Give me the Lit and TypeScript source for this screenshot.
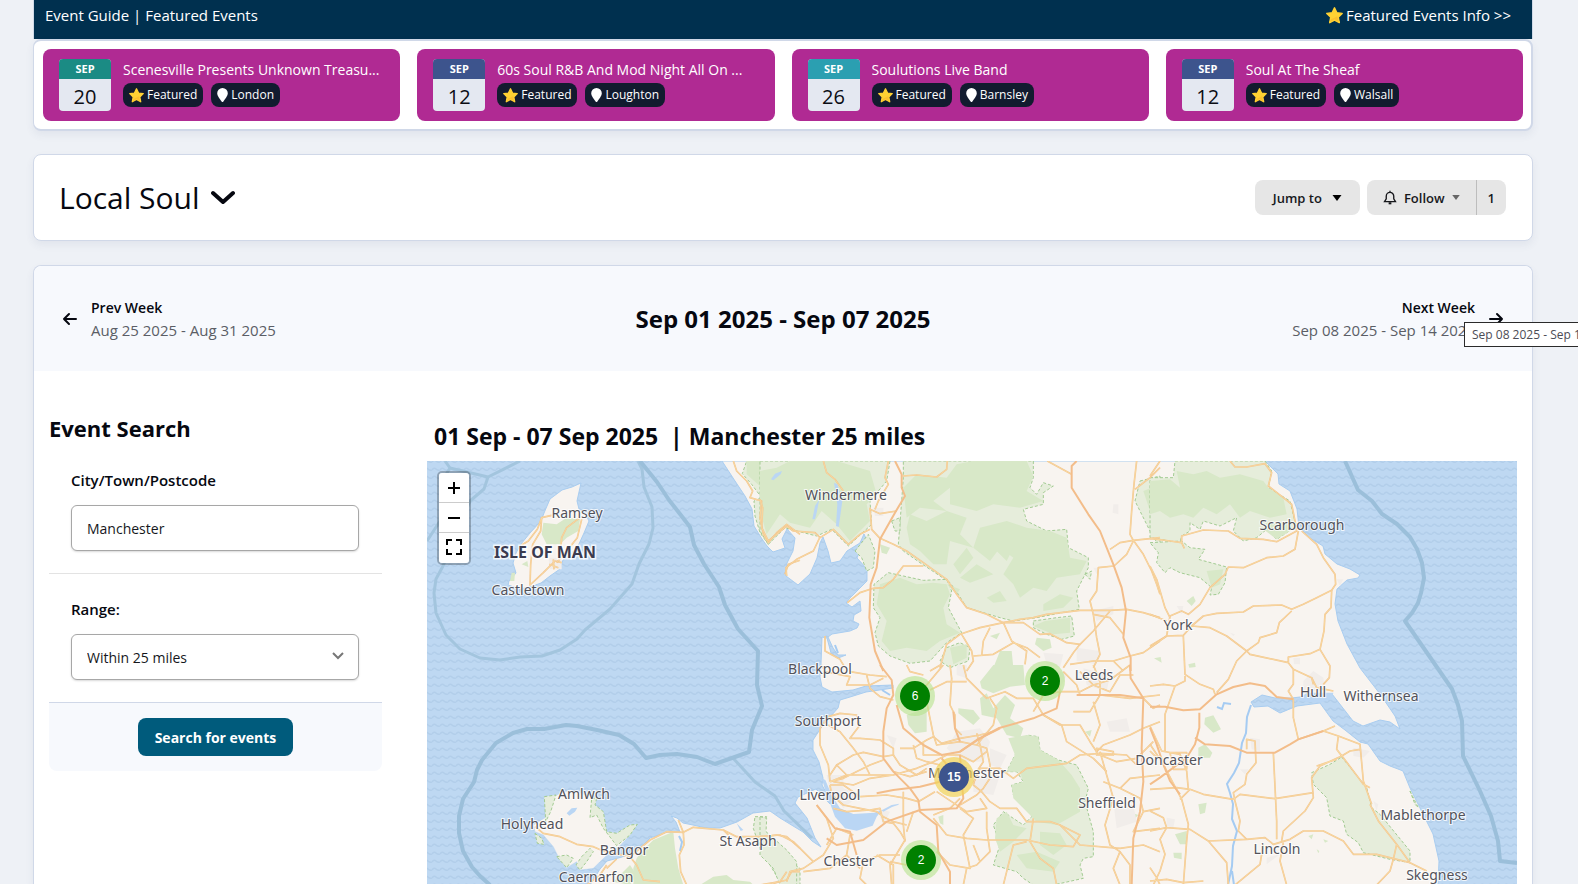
import { LitElement, html, svg, css } from "lit";
import { customElement, property } from "lit/decorators.js";

interface FeaturedEvent {
  month: string;
  day: string;
  title: string;
  town: string;
  tone: string;
}

const EVENTS: FeaturedEvent[] = [
  { month: "SEP", day: "20", title: "Scenesville Presents Unknown Treasu...", town: "London", tone: "green" },
  { month: "SEP", day: "12", title: "60s Soul R&B And Mod Night All On ...", town: "Loughton", tone: "blue" },
  { month: "SEP", day: "26", title: "Soulutions Live Band", town: "Barnsley", tone: "teal" },
  { month: "SEP", day: "12", title: "Soul At The Sheaf", town: "Walsall", tone: "blue" },
];

const star = (cls: string) => html`<svg class=${cls} viewBox="0 0 16 16" aria-hidden="true">
  <path d="M8 .8l2.200 4.600 5 .6-3.700 3.500 1 5.200L8 12.300l-4.500 2.400 1-5.200L.8 6l5-.6z" fill="#ffd233" stroke="#ffd233" stroke-width="1.400" stroke-linejoin="round"/>
  <path d="M10.600 8.800l1.300 5.300L8 11.600l-4 2.400 1-2.600L8 10z" fill="#fcc02f"/>
</svg>`;

/* ---------- map geometry ---------- */

const MAINLAND =
  "M722 460L735 480L745 495L752 508L754 525L762 538L767 545L773 551L785 547L782 538L787 528L795 537L793 550L787 562L786 575L798 584L810 573L817 557L820 542L823 536L828 550L831 562L840 560L847 550L860 542L864 533L868 542L860 550L857 557L867 568L867 580L860 587L850 597L846 602L852 606L860 600L861 610L854 614L853 620L859 623L857 627L850 630L832 633L828 636L833 647L838 654L846 654L838 657L831 652L827 637L822 636L821 663L820 676L822 686L832 691L853 689L866 685L893 684L893 687L866 691L850 696L840 699L838 707L823 724L813 739L813 749L819 761L823 777L822 784L827 793L830 803L816 788L798 796L795 802L807 817L815 837L821 846L812 840L803 831L780 817L770 810L753 812L737 821L720 827L706 827L693 824L683 822L677 817L671 815L676 821L680 831L667 831L650 837L640 847L622 856L607 860L600 868L590 884L1438 884L1439 860L1433 833L1423 813L1410 787L1403 770L1398 768L1390 765L1380 760L1368 743L1360 741L1345 729L1333 720L1320 702L1297 705L1280 712L1268 705L1254 706L1251 701L1262 694L1275 697L1292 697L1308 695L1318 695L1332 693L1353 720L1363 725L1380 719L1390 721L1400 728L1395 715L1380 693L1360 667L1347 643L1338 620L1335 603L1337 588L1347 579L1358 577L1360 574L1350 568L1337 563L1325 553L1323 545L1310 537L1299 526L1297 508L1290 490L1279 483L1278 473L1265 460Z";

const ISLAND =
  "M581 482L572 486L562 489L550 498L544 512L541 520L530 532L521 543L516 552L513 562L516 572L509 580L508 584L520 588L530 586L541 582L550 575L560 568L563 559L571 553L579 543L584 532L589 520L585 512L579 508L577 500Z";

const ANGLESEY =
  "M433 485L470 480L510 465L560 480L590 490L585 510L610 530L620 590L650 595L690 570L712 568L690 600L660 632L630 652L600 680L580 700L540 705L530 680L500 698L475 665L460 635L430 600L405 590L400 570L440 545L437 520ZM405 595L425 610L432 628L412 625Z";

/* Each layer is drawn on its own survey grid at three units to one map unit. */
interface Layer {
  x: number;
  y: number;
  parks: string[];
  woods: string[];
  urban: string[];
  roads: string[];
  motorways: string[];
  water: string[];
}

const LAYERS: Layer[] = [
  {
    x: 400, y: 400,
    parks: ["M1040 180L1200 180L1200 390L1165 370L1140 390L1105 430L1080 395L1065 345L1062 300L1085 290L1055 250L1027 218Z"],
    woods: [
      "M1040 180L1200 180L1200 350L1160 330L1110 370L1090 310L1085 260L1040 220Z",
      "M430 365L470 370L500 350L540 355L535 390L500 410L480 430L440 430L425 400Z",
      "M365 490L382 480L385 498ZM335 515L345 515L343 540L330 540Z",
    ],
    urban: ["M445 470L485 470L485 505L450 505Z"],
    roads: [
      "M455 343L425 350L412 385L385 420L365 432M425 350L422 390L398 430L392 490L390 552L430 515L465 480L485 485",
      "M540 350L500 380L485 410L483 435M545 355L532 410L500 450L470 485M448 490L475 500M460 475L462 505",
      "M1000 180L1010 210L1040 240L1058 270L1050 290L1085 300L1080 350L1090 400L1105 425L1130 395L1160 370L1200 400M1200 478L1165 490L1155 520",
    ],
    motorways: [],
    water: ["M1115 238L1145 208L1140 225L1118 240Z"],
  },
  {
    x: 400, y: 634,
    parks: [
      "M433 485L468 480L452 530L437 560ZM575 490L590 490L585 510L610 530L620 590L650 595L690 570L712 568L690 600L650 632L610 580L590 540L570 548ZM470 665L500 660L520 670L500 698Z",
      "M545 665L570 640L580 650L560 680L540 705L528 690ZM1065 545L1100 545L1085 580L1090 630L1130 640L1170 680L1200 700L1200 750L1140 740L1110 690L1080 640L1060 580Z",
      "M405 595L425 610L432 628L412 625Z",
    ],
    woods: [
      "M735 640L760 615L820 590L825 640L835 700L850 750L700 750L700 700L710 670Z",
      "M900 750L940 725L980 720L1000 735L1050 740L1060 750ZM640 740L690 690L710 720L690 750Z",
    ],
    urban: [],
    roads: [
      "M405 575L430 595L480 605L530 628L580 635L610 648L640 655L690 665L720 640L750 615L800 590L850 592L880 577L970 585L1010 605L1080 605L1130 600L1160 605L1200 640",
      "M835 555L850 592L852 630L838 660L842 710L860 750M690 665L710 690L730 735L780 740M620 700L650 672M560 750L600 720L620 690M1120 745L1160 735L1175 710L1200 710M970 585L985 600",
    ],
    motorways: [],
    water: ["M500 535L515 520L532 518L525 530L508 542ZM1010 565L1030 585L1022 588Z"],
  },
  {
    x: 760, y: 450,
    parks: [
      "M0 30L390 30L380 90L330 150L335 220L265 285L215 235L170 255L90 235L75 230L25 280L0 240Z",
      "M430 30L820 30L820 80L810 110L830 130L850 95L880 105L850 125L850 160L790 175L800 210L860 240L920 235L925 290L985 320L985 350L960 400L950 420L958 475L830 500L760 510L720 500L620 470L595 430L570 395L480 335L430 300L415 280L425 150L430 80Z",
      "M385 365L430 375L490 388L560 385L575 420L565 470L605 545L560 575L510 630L450 637L390 615L355 585L345 545L360 500L340 470L342 400Z",
      "M1140 90L1200 75L1200 290L1170 240L1140 180L1125 150ZM285 300L325 250L345 300L340 350L320 360L305 320Z",
      "M820 510L890 500L935 495L943 555L905 565L860 550L820 530ZM560 590L600 575L630 590L625 630L570 650L540 630Z",
      "M395 210L420 200L420 240L405 240ZM975 370L995 360L990 385Z",
    ],
    woods: [
      "M0 60L50 50L90 30L230 30L330 60L350 130L320 160L330 210L270 270L230 220L185 180L150 230L90 215L60 190L20 250L0 180Z",
      "M470 70L560 80L590 40L640 30L800 30L820 75L800 120L850 150L780 170L700 160L650 180L570 160L570 110L520 150L560 180L480 170L440 200L430 110Z",
      "M450 190L500 210L560 180L620 200L600 250L640 290L570 270L560 340L520 340L480 300L450 280L440 230Z",
      "M640 290L660 230L740 210L800 230L870 240L920 260L930 320L980 330L960 370L890 380L860 420L820 410L780 440L760 400L730 370L760 320L720 290L690 330Z",
      "M580 340L620 290L640 320L600 370ZM600 380L650 340L700 370L630 395ZM680 440L720 420L740 450L700 455ZM850 460L900 430L940 440L910 470L850 480ZM560 400L600 415L590 430ZM700 290L760 290L740 330Z",
      "M360 400L420 380L470 400L520 395L560 400L570 430L550 470L560 520L600 545L540 570L500 600L440 590L390 600L365 570L380 510L350 460Z",
      "M855 510L930 500L930 545L880 550L820 525ZM1150 120L1200 100L1200 190L1170 180ZM570 590L620 580L620 620L580 640ZM830 560L870 565L875 590L850 600L825 580ZM720 600L755 600L760 650L700 650ZM360 280L390 290L380 310L365 305ZM690 555L720 545L710 565Z",
    ],
    urban: ["M1000 480L1060 465L1060 490L1010 510ZM1060 160L1075 160L1075 190L1058 185ZM950 590L1020 600L1010 640L950 630ZM850 605L910 610L900 650L860 640ZM1000 350L1020 350L1010 370ZM340 170L370 170L370 195L345 195Z"],
    roads: [
      "M190 30L200 65L225 85L250 120M385 30L375 80L385 100L355 150L345 175M0 145L8 170L5 230L25 270L80 225L100 240L165 245L180 260L220 235L265 280L300 250L330 235",
      "M80 375L78 350L110 325L160 300L180 258M330 170L335 235L360 262L400 280L440 300L490 335L560 385L590 430L620 470L680 490L730 515L780 505L820 500L860 490L960 478L1000 478L1050 478L1100 475L1150 485L1200 500",
      "M428 75L470 72L530 78L560 55L562 30M330 175L360 188L410 180M262 455L300 425L340 412L370 410L400 385L430 345L490 345M540 650L560 580L600 550L660 530L730 515L790 515L840 550L870 548L920 575L960 580L1000 540L1050 480M605 550L635 600L640 630L620 660",
      "M640 615L700 610L760 575L800 590L840 620M690 530L670 570L665 615M730 515L755 570L800 600L795 640M862 30L935 70M1130 30L1122 100L1115 180L1110 250L1120 268M1125 115L1170 80L1200 50M1050 295L1080 275L1120 268L1200 260M1120 268L1150 310L1175 360L1190 400L1200 430M1120 270L1100 310L1062 345L1015 350L1010 420L990 450L1000 490L1050 500L1090 550M195 555L195 600L240 625L255 650",
      "M1000 490L1010 560L1020 610L1000 650M910 650L940 605L960 580M1110 615L1150 605L1200 570M930 640L1000 630L1060 630L1110 615M1060 630L1090 660M510 660L545 640",
    ],
    motorways: [
      "M405 30L425 70L425 110L435 135L405 185L360 265L350 350L332 400L328 500L345 600L370 660",
      "M950 30L935 45L935 110L985 190L1020 240L1060 340L1085 410L1098 480L1090 560L1112 620L1112 660",
    ],
    water: [
      "M33 85L45 68L66 60L62 70L40 88ZM157 205L165 165L178 145L170 185L165 205ZM228 225L232 160L222 95L232 100L247 150L240 200L236 228Z",
      "M60 350L70 360L73 390L65 385Z",
    ],
  },
  {
    x: 760, y: 664,
    parks: [
      "M765 270L800 210L835 215L840 255L895 285L950 300L985 370L975 410L1000 500L1000 575L970 580L960 600L970 640L880 660L820 660L790 640L770 620L700 600L720 540L700 480L730 440L790 480L820 450L760 390L755 360L790 350L770 320L740 320Z",
      "M0 455L20 460L18 500L80 555L110 590L110 660L60 660L40 610L0 570Z",
    ],
    woods: [
      "M660 50L700 0L790 0L795 60L750 65L700 85L665 70ZM595 130L640 135L660 160L640 180L595 145ZM660 100L680 85L700 130L735 90L765 120L750 160L790 190L780 220L740 210L710 160L665 150Z",
      "M745 220L800 210L835 215L840 255L895 285L935 330L960 370L960 440L890 480L830 470L790 430L760 400L755 360L790 350L780 320L740 320L765 270Z",
      "M440 150L500 130L500 200L465 205L445 180ZM710 460L740 440L760 480L800 490L760 530L720 560L705 520ZM840 500L900 505L920 540L880 570L840 540ZM770 570L830 560L900 590L880 620L800 610ZM535 455L550 450L550 480L540 475ZM975 200L995 195L990 215ZM1120 445L1135 450L1125 460Z",
    ],
    urban: ["M590 200L660 190L690 230L670 290L600 290L560 250ZM200 330L250 330L250 370L300 390L250 430L210 380ZM1040 170L1100 160L1110 200L1050 200ZM1060 410L1120 420L1130 470L1070 490ZM590 0L620 0L620 40L590 30ZM690 250L740 270L720 310L690 300ZM380 210L410 220L400 250ZM880 10L920 30L900 70ZM540 310L600 320L590 380L540 370ZM640 330L720 330L700 390L640 380ZM970 10L1050 30L1040 80L980 60ZM350 430L390 440L370 480Z"],
    roads: [
      "M185 0L195 20L270 35L260 60L330 60L370 40M270 20L330 30L380 35M320 30L330 70L360 95L400 105M205 155L180 190L180 240L205 300L210 350M205 155L240 145L290 150L300 180L270 220L300 220L360 225L400 250L400 270L370 275L310 262L280 270L230 300L210 330",
      "M205 180L240 200L280 250L310 290L330 330M230 300L260 330M210 350L260 330L400 330L470 310L520 290L560 270L600 270L640 290L680 260M210 350L250 340L330 300L370 285M220 350L280 360L330 340L400 330M400 320L450 335L500 320",
      "M210 360L250 360L300 395L380 390L440 400L475 410L525 380M210 360L215 390L250 420L300 430L350 440L370 455L400 470L440 480M220 430L260 440L330 435L360 430L370 470L400 475L420 500L435 525L390 600L395 660",
      "M400 270L420 300L470 330L500 310M420 250L460 250L500 225L520 215L545 235L600 220L660 210L700 200M460 240L470 280L500 290L540 300M490 230L490 270L540 270",
      "M430 380L430 480L435 530M500 110L510 160L520 210L530 240L600 230L650 240L680 250L690 300L690 340L670 370L650 390L600 420M650 205L660 240L670 290L650 320L640 360L665 380L690 410L720 430L770 430L800 470L870 470L900 480L960 540L1080 550",
      "M570 0L575 40L570 120L585 150L585 190L605 210M610 0L620 40L680 100L735 80L770 100L820 100L850 150L905 180L920 230L1000 280L1040 320M550 0L500 60L440 110M620 50L560 50L510 75M690 100L710 130L700 180L650 240",
      "M640 355L660 310L720 310L760 340L800 310L920 295L960 270L1020 265L1100 270L1130 300M820 460L810 530L840 580L880 610L890 660M800 530L760 540L740 620L730 660M560 510L620 520L680 525L800 525L870 540L940 545L960 510L900 480",
      "M600 430L640 460L610 510L620 560L630 610L570 600L530 560M680 440L680 490L690 560L650 600L620 610L610 660M520 460L560 510M460 440L440 500M530 380L560 400L620 440L680 430L660 400M600 400L570 430L520 450M640 540L660 590",
      "M170 420L200 460L220 520L190 570L130 610L90 620L80 650M0 515L60 510L100 530L160 590M200 540L230 490L280 510M270 510L260 570L210 610L130 620M310 590L360 570L420 570M310 590L300 640L320 660M260 570L300 610M350 570L400 600L400 660M0 660L60 650L80 620",
      "M890 30L900 80L960 80L1000 60L1050 80L1080 30L1120 30M910 20L950 60L960 90M1000 0L1020 50L1020 90L1110 100L1200 90M960 20L1000 60L1050 45L1110 0M850 150L900 180L960 180L990 230L1010 260L1030 240L1110 210L1150 190L1200 170M1000 110L1020 180L1000 230M1020 90L990 140L940 140M820 140L850 90L900 80M1020 260L1040 330L1060 400L1035 480L1050 540L1080 560L1110 600L1110 660",
      "M1020 270L1070 290L1130 280L1180 230M1030 350L1080 370L1140 400L1150 440L1120 500L1200 490M1080 370L1110 340L1200 330M1080 550L1150 540L1200 560M1080 560L1060 610L1080 660M1150 440L1200 430M1010 250L1060 260L1060 270L1010 270ZM1150 100L1180 130L1200 120M440 0L450 20L490 30M390 590L440 600",
    ],
    motorways: [
      "M360 0L395 45L400 90L380 130L370 200L370 280L400 320L450 370L475 405L480 440L530 480L535 560L570 620L570 660",
      "M410 120L430 190L490 240L545 270L600 260L650 225L715 190L820 160L890 130L900 80",
      "M600 270L605 350L610 400L590 430L480 435L380 470L310 525L230 540L200 520M600 230L585 190L580 140M545 280L570 310L540 350L480 365L400 375L350 385",
      "M170 420L225 490L270 500L290 570M1110 0L1112 40L1150 100L1145 250L1150 350L1140 440L1120 520L1115 660M950 90L1080 90L1150 100M720 190L660 220L600 260",
    ],
    water: [
      "M185 340L200 390L212 420L225 455L255 490L290 497L338 482L350 455L365 436L343 443L280 447L240 430L215 390L196 345ZM365 436L395 420L418 416L414 420L396 426L370 440Z",
    ],
  },
  {
    x: 1150, y: 450,
    parks: [
      "M0 80L70 80L75 30L345 30L365 60L355 110L420 150L432 200L440 225L380 265L350 235L320 260L280 270L250 240L260 200L210 225L160 210L150 235L120 215L120 240L95 255L90 275L0 260Z",
      "M0 275L95 270L120 290L165 295L145 325L230 348L225 395L205 430L180 432L185 410L150 380L90 365L60 350L45 365L20 335L25 305Z",
      "M575 918L650 1010L665 1070L690 1090L780 1200L780 1235L720 1225L640 1205L625 1175L590 1150L580 1110L540 1095L530 1040L490 1000L485 965L540 940Z",
      "M780 1020L805 1070L795 1060Z",
    ],
    woods: [
      "M0 90L60 85L90 110L80 60L130 70L170 60L210 80L270 70L340 90L355 110L400 140L410 190L360 200L300 180L270 200L240 160L200 190L160 170L130 200L100 190L60 200L30 180L0 190ZM340 235L350 215L420 215L420 240L380 265Z",
      "M165 800L190 793L213 835L190 845L163 820ZM145 890L165 880L187 905L180 920L145 920ZM110 450L130 435L137 450L125 465ZM12 622L32 618L35 635ZM115 640L135 635L137 648L118 650ZM75 1150L110 1140L110 1180L90 1180Z",
      "M70 1205L95 1205L95 1225L72 1220ZM145 1060L170 1055L165 1085L150 1090ZM475 1155L490 1150L485 1165ZM520 1165L535 1170L525 1175ZM500 1195L508 1200L505 1207ZM170 360L220 355L210 400L185 410Z",
    ],
    urban: ["M460 690L490 660L520 680L525 720L460 720ZM430 620L450 620L450 640L432 640ZM610 890L660 900L640 920L610 915ZM300 860L330 865L330 900L305 895ZM350 1220L390 1210L350 1240ZM670 1050L685 1060L680 1080ZM80 465L100 465L95 490ZM240 545L255 550L250 555ZM50 1100L75 1105L70 1130L50 1125ZM270 955L295 955L285 970ZM560 385L580 385L570 405Z"],
    roads: [
      "M240 30L255 48L290 48L345 38L365 65L355 105L400 140L425 160L435 210L440 240L380 272L340 265L270 262L235 240L160 237L95 255L95 275L60 270L0 262M95 275L103 292",
      "M455 240L500 280L520 320L555 370L557 400L545 418L500 440L460 460L425 475L395 462L310 465L280 483L200 487L160 495L125 525M445 240L435 295L400 315L350 320L280 350L235 348L225 370L180 410L150 460L115 490L95 480L60 495L50 555L0 585",
      "M545 418L543 470L525 490L522 540L510 595L540 645L538 680L520 700M510 595L480 608L415 618L415 635L300 610L290 600L325 575L330 560L380 545L388 515L425 480M415 635L430 655L485 680L500 710L550 720M430 655L430 700L415 720L430 745L430 800L445 865",
      "M0 345L20 385L45 470L60 500M125 525L180 530L230 555L290 600L260 630L235 685L200 725M0 490L50 510M100 555L105 670L150 700L190 715L195 730M50 555L100 553L125 525M105 675L105 690L75 705L45 790L45 900M0 705L40 700L75 705M0 590L50 555",
      "M485 680L490 700M520 840L565 855L630 880L640 990L665 1060M445 865L520 840L555 825M565 855L560 895L580 920L640 1000L660 1010M560 895L575 915L510 945L485 980L490 1040L465 1080L400 1140L395 1170M575 915L600 900L630 895M500 945L560 925",
      "M660 1060L685 1110L740 1180L780 1235L830 1260M740 1180L730 1225L720 1260L680 1302M290 895L290 865L315 870L318 935L290 970L285 1000L250 1025L255 1050L270 1110L265 1140L290 1165M370 905L380 1110L380 1165M250 1045L270 1030L375 1043L490 1025",
      "M30 30L0 75M0 1015L80 1010L120 1015L160 1030L250 1045M0 825L35 900L90 910L110 960L115 1015M40 940L95 1045L115 1120L110 1170L100 1302M90 1045L120 1015M60 905L110 905L110 955L70 955ZM0 880L40 940M0 1080L40 1100L50 1130L120 1135L175 1170L290 1165L345 1160L370 1180L420 1165L460 1140L520 1140L580 1170L610 1210L680 1210L740 1225L780 1235",
      "M175 1170L230 1235L235 1302M0 1140L50 1130M50 1130L30 1165L45 1210L30 1260L10 1302M0 1290L50 1285L100 1295L160 1290M340 1180L330 1240L255 1302M400 1175L390 1230L410 1302M0 1250L20 1280L30 1302M0 900L20 920",
    ],
    motorways: [
      "M0 767L45 767L100 778L150 775L200 730L250 708L300 697L345 705L380 738L430 745M148 785L148 830L135 880L110 920L30 980L0 1000M135 860L165 880L240 885L290 905L375 905L420 880L445 865L520 840M0 830L20 880L40 940L60 990L90 1030",
    ],
    water: [
      "M470 725L550 725L545 745L510 755L440 750Z",
    ],
  },
];

const RIVERS =
  "M1251 704L1247 716L1246 732L1242 742L1239 762L1234 772L1227 783L1230 792L1233 803L1232 818L1237 830L1233 845L1232 865L1228 884M1217 706L1222 708L1224 702L1231 703M835 644L838 652M882 689L890 694M1234 884L1232 870M679 835L682 841L680 850";

const LIMITS = [
  "M640 460L657 481L669 499L680 513L690 526L694 544L704 563L719 586L725 604L738 628L758 650L757 684L762 705L752 729L749 751L732 757L715 763L697 756L677 753L660 754L646 757L634 743L619 734L597 729L577 725L566 724L544 728L527 728L513 732L496 742L482 759L477 769L474 781L463 798L459 815L459 832L463 850L472 866L480 875L490 884",
  "M1345 460L1358 489L1372 500L1382 513L1397 523L1410 536L1417 548L1422 562L1424 577L1421 592L1418 602L1412 612L1405 620L1452 688L1458 704L1462 720L1463 755L1480 790L1491 815L1498 840L1500 860L1517 862",
];
const LIMITS_SOFT = [
  "M445 460L450 467L488 476L520 460M450 467L442 480L440 520L427 540M488 476L484 488L470 500L443 565L436 578L434 592L436 612L446 634L460 648L480 657L500 659L520 656L542 655L560 649L577 638L585 629L610 608L632 583L639 563L649 543L653 527L652 506L644 486L642 468L638 460",
  "M733 757L755 781L775 795L784 810L812 837",
];

interface Place { x: number; y: number; name: string }
const PLACES: Place[] = [
  { x: 577, y: 517, name: "Ramsey" },
  { x: 528, y: 594, name: "Castletown" },
  { x: 846, y: 499, name: "Windermere" },
  { x: 1302, y: 529, name: "Scarborough" },
  { x: 1178, y: 629, name: "York" },
  { x: 820, y: 673, name: "Blackpool" },
  { x: 1094, y: 679, name: "Leeds" },
  { x: 1313, y: 696, name: "Hull" },
  { x: 1381, y: 700, name: "Withernsea" },
  { x: 828, y: 725, name: "Southport" },
  { x: 967, y: 777, name: "Manchester" },
  { x: 1169, y: 764, name: "Doncaster" },
  { x: 1107, y: 807, name: "Sheffield" },
  { x: 830, y: 799, name: "Liverpool" },
  { x: 584, y: 798, name: "Amlwch" },
  { x: 532, y: 828, name: "Holyhead" },
  { x: 624, y: 854, name: "Bangor" },
  { x: 748, y: 845, name: "St Asaph" },
  { x: 849, y: 865, name: "Chester" },
  { x: 596, y: 881, name: "Caernarfon" },
  { x: 1423, y: 819, name: "Mablethorpe" },
  { x: 1277, y: 853, name: "Lincoln" },
  { x: 1437, y: 879, name: "Skegness" },
];

const CLUSTERS = [
  { x: 915, y: 695, count: 6, busy: false },
  { x: 1045, y: 680, count: 2, busy: false },
  { x: 954, y: 776, count: 15, busy: true },
  { x: 921, y: 859, count: 2, busy: false },
];

@customElement("event-map")
export class EventMap extends LitElement {
  static styles = css`
    :host { display: block; position: relative; overflow: hidden; background: #bed8f2; font-family: "Noto Sans", "Open Sans", sans-serif; }
    .canvas { position: absolute; inset: 0; width: 100%; height: 100%; display: block; }
    .land { fill: #f8f4f0; stroke: #a9cdf0; stroke-width: 1; }
    .park { fill: #e6eddb; stroke: #a3cb93; stroke-width: 3; stroke-dasharray: 9 6; }
    .wood { fill: #d8e8c8; }
    .urban { fill: #f1edea; }
    .road-case { fill: none; stroke: #f1c48e; stroke-width: 5; stroke-linejoin: round; }
    .road { fill: none; stroke: #fcdfa6; stroke-width: 2; stroke-linejoin: round; }
    .motorway { fill: none; stroke: #f3bd8a; stroke-width: 6; stroke-linejoin: round; }
    .water { fill: #bad6f4; }
    .river { fill: none; stroke: #a5cbf2; stroke-width: 2; }
    .limit { fill: none; stroke: #9bbfda; stroke-width: 4; stroke-linejoin: round; }
    .limit.soft { stroke: #a3c5de; stroke-width: 3; }
    .wave { fill: none; stroke: #b2ceea; stroke-width: 1.500; }
    .place { font-size: 14px; fill: #52525a; stroke: #fff; stroke-opacity: .8; stroke-width: 2px; paint-order: stroke; text-anchor: middle; }
    .region { font-size: 16px; font-weight: 700; fill: #3b3b4f; stroke: #fff; stroke-opacity: .8; stroke-width: 3px; paint-order: stroke; text-anchor: middle; }
    .halo { fill: #b5e28c; fill-opacity: .6; }
    .dot { fill: #008000; }
    .halo.busy { fill: #f1d357; fill-opacity: .7; }
    .dot.busy { fill: #3d548d; }
    .count { font: 12px "Liberation Sans", Arial, sans-serif; fill: #fff; text-anchor: middle; }
    .count.busy { font-weight: 700; }
    .controls { position: absolute; left: 10px; top: 10px; display: flex; flex-direction: column; border: 2px solid rgba(0, 0, 0, .25); border-radius: 5px; background-clip: padding-box; }
    .controls button { width: 30px; height: 30px; padding: 0; border: 0; border-bottom: 1px solid #ccc; background: #fff; display: grid; place-items: center; cursor: pointer; }
    .controls button:first-child { border-radius: 3px 3px 0 0; }
    .controls button:last-child { border-bottom: 0; border-radius: 0 0 3px 3px; }
    .controls svg { width: 18px; height: 18px; fill: none; stroke: #000; stroke-width: 2; }
  `;

  render() {
    return html`
      <svg class="canvas" viewBox="427 460 1090 424" preserveAspectRatio="xMidYMin slice" role="img" aria-label="Map of events around Manchester">
        <defs>
          <pattern id="waves" width="8" height="8" patternUnits="userSpaceOnUse">
            <path class="wave" d="M0 5q2 -3 4 -1t4 1" />
          </pattern>
        </defs>
        <rect x="427" y="460" width="1090" height="424" fill="url(#waves)" />
        <path class="land" d=${ISLAND} />
        <g transform="translate(400 634) scale(.33333)"><path class="land" d=${ANGLESEY} /></g>
        <path class="land" d=${MAINLAND} />
        ${LAYERS.map((l) => svg`<g transform="translate(${l.x} ${l.y}) scale(.33333)">
          ${l.parks.map((d) => svg`<path class="park" d=${d} />`)}
          ${l.woods.map((d) => svg`<path class="wood" d=${d} />`)}
          ${l.urban.map((d) => svg`<path class="urban" d=${d} />`)}
          ${l.water.map((d) => svg`<path class="water" d=${d} />`)}
        </g>`)}
        <path class="river" d=${RIVERS} />
        ${LAYERS.map((l) => svg`<g transform="translate(${l.x} ${l.y}) scale(.33333)">
          ${l.roads.map((d) => svg`<path class="road-case" d=${d} /><path class="road" d=${d} />`)}
          ${l.motorways.map((d) => svg`<path class="motorway" d=${d} />`)}
        </g>`)}
        ${LIMITS_SOFT.map((d) => svg`<path class="limit soft" d=${d} />`)}
        ${LIMITS.map((d) => svg`<path class="limit" d=${d} />`)}
        ${PLACES.map((p) => svg`<text class="place" x=${p.x} y=${p.y}>${p.name}</text>`)}
        <text class="region" x="545" y="557">ISLE OF MAN</text>
        ${CLUSTERS.map((c) => svg`
          <circle class="halo ${c.busy ? "busy" : ""}" cx=${c.x} cy=${c.y} r="20" />
          <circle class="dot ${c.busy ? "busy" : ""}" cx=${c.x} cy=${c.y} r="15" />
          <text class="count ${c.busy ? "busy" : ""}" x=${c.x} y=${c.y + 4}>${c.count}</text>`)}
      </svg>
      <div class="controls">
        <button aria-label="Zoom in"><svg viewBox="0 0 18 18"><path d="M3 9h12M9 3v12" /></svg></button>
        <button aria-label="Zoom out"><svg viewBox="0 0 18 18"><path d="M3 9h12" /></svg></button>
        <button aria-label="Full screen"><svg viewBox="0 0 18 18"><path d="M2 6V1h5M11 1h5v5M16 10v5h-5M7 15H2v-5" /></svg></button>
      </div>
    `;
  }
}

@customElement("featured-card")
export class FeaturedCard extends LitElement {
  @property({ attribute: false }) event!: FeaturedEvent;

  static styles = css`
    :host { display: block; min-width: 0; }
    .card { display: flex; gap: 12px; padding: 10px 16px; background: #b02a93; border-radius: 8px; color: #fff; }
    .date { flex: none; width: 52px; height: 52px; border-radius: 4px; overflow: hidden; background: #e4e8f1; text-align: center; }
    .month { height: 20px; font-size: 11px; line-height: 20px; font-weight: 700; }
    .day { color: #0b0d14; font-size: 20px; line-height: 35px; }
    .green { background: #1b8b84; }
    .blue { background: #3d548d; }
    .teal { background: #2b9fb1; }
    .body { min-width: 0; }
    .title { display: block; color: #fff; text-decoration: none; font-size: 14px; line-height: 22px; white-space: nowrap; overflow: hidden; text-overflow: ellipsis; }
    .pills { display: flex; gap: 8px; margin-top: 2px; }
    .pill { display: flex; align-items: center; gap: 3px; height: 24px; padding: 0 6px; border-radius: 8px; background: #121b2f; font-size: 12px; line-height: 24px; }
    .star { width: 15px; height: 15px; }
    .pin { width: 11px; height: 14px; }
  `;

  render() {
    const e = this.event;
    return html`<article class="card">
      <div class="date"><div class="month ${e.tone}">${e.month}</div><div class="day">${e.day}</div></div>
      <div class="body">
        <a class="title" href="#">${e.title}</a>
        <div class="pills">
          <span class="pill">${star("star")}Featured</span>
          <span class="pill"><svg class="pin" viewBox="0 0 11 14" aria-hidden="true"><path fill="#fff" d="M5.500 0A5.300 5.300 0 0 0 .2 5.300C.2 8.200 3.400 11.600 4.600 13.500q.9 1 1.800 0C7.600 11.600 10.800 8.200 10.800 5.300A5.300 5.300 0 0 0 5.500 0z"/></svg>${e.town}</span>
        </div>
      </div>
    </article>`;
  }
}

@customElement("app-root")
export class AppRoot extends LitElement {
  static styles = css`
    :host { display: flex; flex-direction: column; min-height: 100vh; box-sizing: border-box; padding: 0 45px 0 33px; background: #eef1f6; color: #060810; font-family: "Open Sans", "Noto Sans", sans-serif; font-size: 15px; line-height: 22px; }
    *, *::before, *::after { box-sizing: border-box; }
    h1, h2, p { margin: 0; }
    button { font-family: inherit; color: inherit; }
    a { color: inherit; text-decoration: none; }
    .bar { display: flex; justify-content: space-between; align-items: flex-start; height: 39px; padding: 4px 21px 0 11px; border-left: 1px solid #d0dae8; border-right: 1px solid #d0dae8; background: #00304f; background-clip: padding-box; color: #fff; }
    .bar a { display: flex; align-items: center; gap: 3px; }
    .bar .star { width: 17px; height: 17px; }
    .box { border: 1px solid #d0d8e8; border-radius: 8px; background: #fff; box-shadow: 0 4px 8px rgba(60, 70, 110, .07); }
    .featured { display: grid; grid-template-columns: repeat(4, minmax(0, 1fr)); gap: 17px; padding: 8px 8px 8px 9px; border-width: 2px 2px 2px 1px; }
    .heading { display: flex; justify-content: space-between; align-items: center; margin-top: 23px; padding: 25px; }
    .heading h1 { display: flex; align-items: center; gap: 11px; font-size: 30px; line-height: 35px; font-weight: 500; }
    .chevron { width: 24px; height: 15px; fill: none; stroke: #060810; stroke-width: 4; stroke-linecap: round; stroke-linejoin: round; }
    .actions { display: flex; gap: 7px; padding-right: 1px; }
    .action { display: flex; align-items: center; justify-content: center; gap: 10px; height: 35px; padding: 0 18px; border: 0; border-radius: 8px; background: #e6e6e6; font-size: 13px; font-weight: 600; color: #17181c; }
    .action.follow { gap: 7px; padding: 0 16px; border-radius: 8px 0 0 8px; }
    .action.total { padding: 0 11px; border-left: 1px solid #bdbdbd; border-radius: 0 8px 8px 0; }
    .split { display: flex; }
    .caret { width: 10px; height: 6px; }
    .caret.small { width: 8px; height: 5px; fill: #666; }
    .bell { width: 14px; height: 15px; fill: none; stroke: #17181c; stroke-width: 2; }
    .week { flex: 1; display: flex; flex-direction: column; margin-top: 24px; border-bottom: 0; border-radius: 8px 8px 0 0; }
    .nav { display: grid; grid-template-columns: 1fr auto 1fr; align-items: center; height: 105px; padding: 0 28px; border-radius: 8px 8px 0 0; background: #f7f9fd; }
    .nav h2 { font-size: 24px; line-height: 30px; font-weight: 700; }
    .step { display: flex; align-items: center; gap: 14px; font-size: 14px; line-height: 23px; font-weight: 600; }
    .step span { display: block; font-size: 15px; font-weight: 500; color: #5b5e66; }
    .next { justify-self: end; text-align: right; }
    .arrow { width: 15px; height: 14px; fill: none; stroke: #060810; stroke-width: 2; stroke-linecap: round; stroke-linejoin: round; }
    .tip { position: fixed; left: 1464px; top: 322px; padding: 0 7px; border: 1px solid #2b2b2b; background: #fff; color: #4c4c55; font-size: 12px; line-height: 23px; font-weight: 400; white-space: nowrap; }
    .main { flex: 1; display: grid; grid-template-columns: 333px minmax(0, 1fr); gap: 45px; padding: 0 15px; }
    .search { padding-top: 42px; }
    .search h2 { font-size: 22px; line-height: 30px; font-weight: 700; }
    .results h2 { font-size: 23px; line-height: 30px; font-weight: 700; }
    .field { padding: 24px 22px 22px; border-bottom: 1px solid #e3e3e3; }
    .field label { display: block; margin-bottom: 13px; font-size: 15px; line-height: 23px; font-weight: 600; }
    .field.place-field { padding-top: 26px; }
    .field.range-field { border-bottom-color: #d0d8e8; }
    .control { position: relative; }
    .control input, .control select { display: block; width: 288px; max-width: 100%; height: 46px; padding: 0 15px; border: 1px solid #a7a7a7; border-radius: 6px; background: #fff; box-shadow: 0 1px 2px rgba(0, 0, 0, .15); font: 14px "Open Sans", "Noto Sans", sans-serif; color: #15171c; appearance: none; }
    .control svg { position: absolute; right: 16px; top: 18px; width: 12px; height: 8px; fill: none; stroke: #777; stroke-width: 2; pointer-events: none; }
    .submit { display: flex; justify-content: center; padding: 15px; border-radius: 0 0 8px 8px; background: #f7f9fd; }
    .submit button { height: 38px; padding: 0 17px; border: 0; border-radius: 8px; background: #005b7c; color: #fff; font-size: 14px; font-weight: 700; white-space: nowrap; }
    .results { display: flex; flex-direction: column; padding-top: 50px; }
    .results h2 { padding: 0 7px 10px; white-space: pre; }
    event-map { flex: 1; min-height: 320px; }
  `;

  render() {
    return html`
      <header class="bar">
        <div>Event Guide | Featured Events</div>
        <a href="#">${star("star")}Featured Events Info &gt;&gt;</a>
      </header>
      <section class="box featured" aria-label="Featured events">
        ${EVENTS.map((e) => html`<featured-card .event=${e}></featured-card>`)}
      </section>
      <section class="box heading">
        <h1>Local Soul <svg class="chevron" viewBox="0 0 24 15"><path d="M2 3l10 9L22 3" /></svg></h1>
        <div class="actions">
          <button class="action">Jump to <svg class="caret" viewBox="0 0 9 6"><path d="M0 0h9L4.500 6z" /></svg></button>
          <div class="split">
            <button class="action follow">
              <svg class="bell" viewBox="0 0 20 22"><path d="M2 17h16l-2.500-4V9a5.500 5.500 0 0 0-11 0v4zM10 3.500V1" /><path d="M8 19.500h4" stroke-width="3" /></svg>
              Follow <svg class="caret small" viewBox="0 0 9 6"><path d="M0 0h9L4.500 6z" /></svg>
            </button>
            <button class="action total" aria-label="1 follower">1</button>
          </div>
        </div>
      </section>
      <section class="box week">
        <nav class="nav" aria-label="Week">
          <a class="step" href="#"><svg class="arrow" viewBox="0 0 15 14"><path d="M14 7H2M7 2L2 7l5 5" /></svg><div>Prev Week<span>Aug 25 2025 - Aug 31 2025</span></div></a>
          <h2>Sep 01 2025 - Sep 07 2025</h2>
          <a class="step next" href="#"><div>Next Week<span>Sep 08 2025 - Sep 14 2025</span></div><svg class="arrow" viewBox="0 0 15 14"><path d="M1 7h12M8 2l5 5-5 5" /></svg></a>
        </nav>
        <div class="tip" role="tooltip">Sep 08 2025 - Sep 14 2025</div>
        <div class="main">
          <form class="search">
            <h2>Event Search</h2>
            <div class="field place-field">
              <label for="town">City/Town/Postcode</label>
              <div class="control"><input id="town" type="text" .value=${"Manchester"} /></div>
            </div>
            <div class="field range-field">
              <label for="range">Range:</label>
              <div class="control">
                <select id="range"><option>Within 25 miles</option></select>
                <svg viewBox="0 0 12 8"><path d="M1 1l5 5 5-5" /></svg>
              </div>
            </div>
            <div class="submit"><button type="button">Search for events</button></div>
          </form>
          <div class="results">
            <h2>01 Sep - 07 Sep 2025  | Manchester 25 miles</h2>
            <event-map></event-map>
          </div>
        </div>
      </section>
    `;
  }
}
